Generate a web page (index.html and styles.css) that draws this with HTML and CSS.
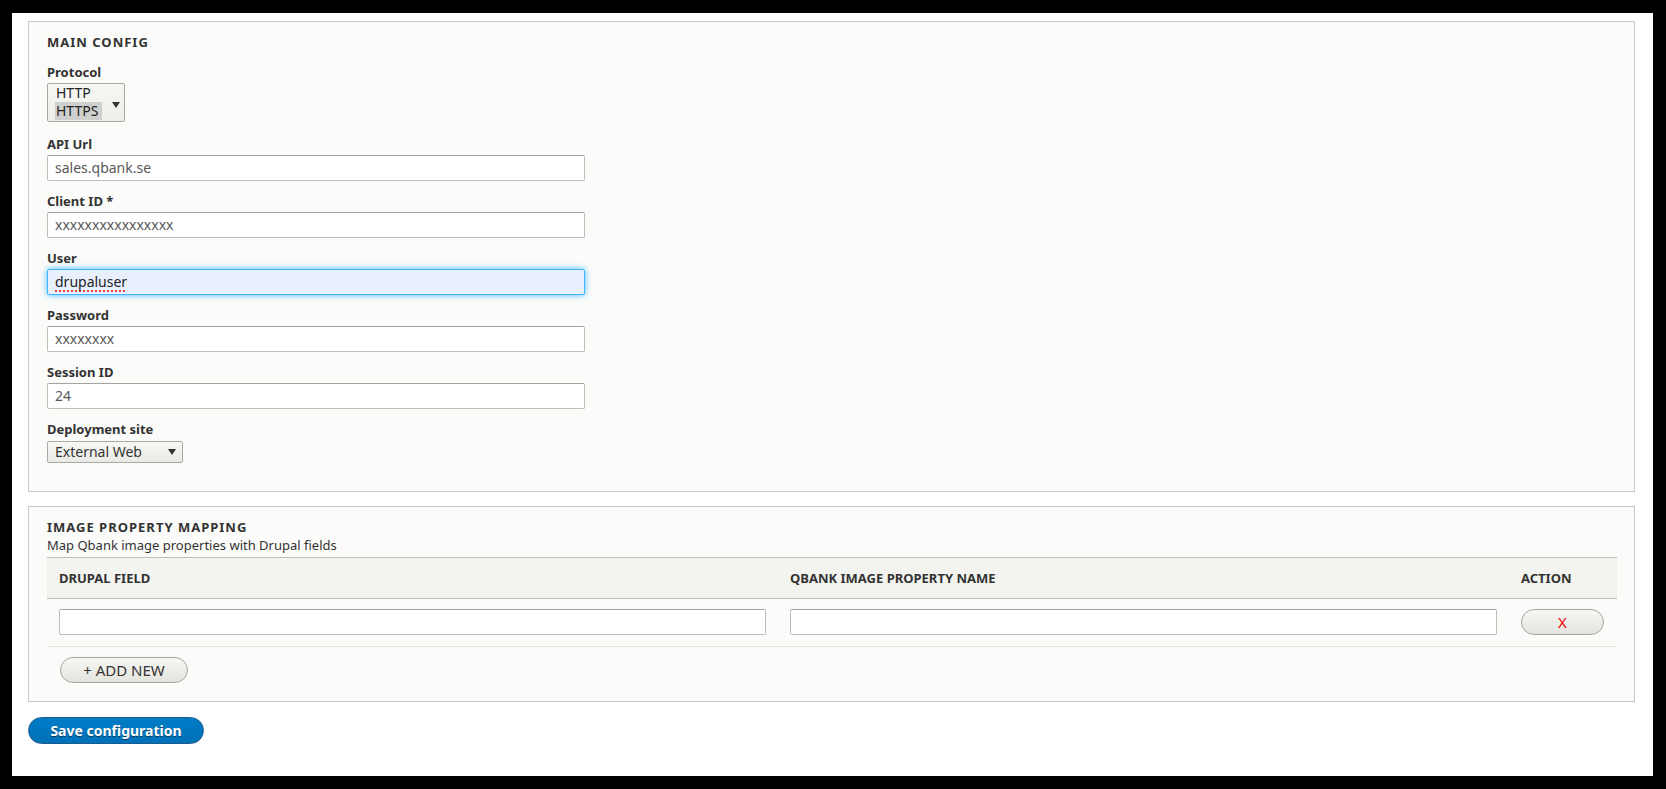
FILE: index.html
```html
<!DOCTYPE html>
<html lang="en">
<head>
<meta charset="utf-8">
<title>Qbank configuration</title>
<link rel="stylesheet" href="styles.css">
</head>
<body>
<div class="page">
  <form class="form">
    <section class="fieldset fieldset-main">
      <h2 class="legend">Main config</h2>

      <div class="form-item form-item-protocol">
        <label class="label">Protocol</label>
        <div class="listbox">
          <div class="listbox-options">
            <span class="option">HTTP</span>
            <span class="option option-selected">HTTPS</span>
          </div>
          <span class="arrow listbox-arrow"></span>
        </div>
      </div>

      <div class="form-item">
        <label class="label">API Url</label>
        <div class="input">sales.qbank.se</div>
      </div>

      <div class="form-item">
        <label class="label">Client ID *</label>
        <div class="input">xxxxxxxxxxxxxxxx</div>
      </div>

      <div class="form-item">
        <label class="label">User</label>
        <div class="input input-focus"><span class="spell">drupaluser</span></div>
      </div>

      <div class="form-item">
        <label class="label">Password</label>
        <div class="input">xxxxxxxx</div>
      </div>

      <div class="form-item">
        <label class="label">Session ID</label>
        <div class="input">24</div>
      </div>

      <div class="form-item form-item-last">
        <label class="label">Deployment site</label>
        <div class="select">
          <span class="select-value">External Web</span>
          <span class="arrow"></span>
        </div>
      </div>
    </section>

    <section class="fieldset fieldset-mapping">
      <h2 class="legend">Image property mapping</h2>
      <p class="description">Map Qbank image properties with Drupal fields</p>
      <table class="mapping">
        <colgroup>
          <col>
          <col>
          <col class="col-action">
        </colgroup>
        <thead>
          <tr>
            <th>Drupal field</th>
            <th>Qbank image property name</th>
            <th>Action</th>
          </tr>
        </thead>
        <tbody>
          <tr>
            <td><div class="input input-cell"></div></td>
            <td><div class="input input-cell"></div></td>
            <td><button type="button" class="button button-remove">X</button></td>
          </tr>
        </tbody>
      </table>
      <button type="button" class="button button-add">+ ADD NEW</button>
    </section>

    <button type="button" class="button button-primary">Save configuration</button>
  </form>
</div>
</body>
</html>
```

FILE: styles.css
```css
* {
  box-sizing: border-box;
}

html,
body {
  margin: 0;
}

body {
  background: #000;
  padding: 13px 13px 13px 12px;
  font-family: "Noto Sans", "DejaVu Sans", sans-serif;
  color: #333;
}

.page {
  background: #fff;
  height: 763px;
  padding: 8px 18px 0 16px;
}

.form {
  display: flex;
  flex-direction: column;
  align-items: flex-start;
}

.fieldset {
  align-self: stretch;
  border: 1px solid #c8c8c4;
  background: #fbfbf9;
  padding: 11px 17px 28px 18px;
}

.fieldset-mapping {
  margin-top: 14px;
  padding-bottom: 18px;
}

.legend {
  margin: 0 0 12px;
  font-size: 13px;
  line-height: 18px;
  font-weight: bold;
  text-transform: uppercase;
  letter-spacing: 1px;
  color: #333;
}

.fieldset-mapping .legend {
  margin-bottom: 0;
}

.description {
  margin: 0 0 3px;
  font-size: 13px;
  line-height: 18px;
  color: #333;
}

.form-item {
  margin-bottom: 11px;
}

.form-item-protocol {
  margin-bottom: 13px;
}

.form-item-last {
  margin-bottom: 0;
}

.label {
  display: block;
  font-size: 13px;
  line-height: 18px;
  font-weight: bold;
  color: #333;
  margin-bottom: 2px;
}

.input {
  width: 538px;
  height: 26px;
  border: 1px solid #bdbdb9;
  border-top-color: #a3a3a0;
  border-radius: 2px;
  background: #fff;
  padding: 0 7px;
  font-size: 14px;
  line-height: 24px;
  color: #595959;
  white-space: nowrap;
  overflow: hidden;
}

.input-focus {
  border-color: #40b6ff;
  background: #e8f0fe;
  box-shadow: 0 0 6px #40b6ff;
  color: #222;
  overflow: visible;
}

.spell {
  text-decoration: underline dotted #e2403a;
  text-decoration-thickness: 2px;
  text-underline-offset: 3px;
}

.listbox {
  display: flex;
  align-items: flex-start;
  width: 78px;
  height: 39px;
  border: 1px solid #a8a8a4;
  border-radius: 2px;
  background: linear-gradient(#f7f7f4, #ececE8);
  padding: 0 4px 0 7px;
}

.listbox-options {
  display: flex;
  flex-direction: column;
  align-items: flex-start;
}

.option {
  font-size: 14px;
  line-height: 18px;
  padding: 0 4px 0 1px;
  color: #222;
}

.option-selected {
  background: #cfcfcd;
}

.arrow {
  width: 0;
  height: 0;
  border-left: 4px solid transparent;
  border-right: 4px solid transparent;
  border-top: 6px solid #333;
}

.listbox-arrow {
  margin-left: auto;
  margin-top: 18px;
}

.select {
  display: flex;
  align-items: center;
  justify-content: space-between;
  width: 136px;
  height: 22px;
  margin-top: 3px;
  border: 1px solid #a8a8a4;
  border-radius: 2px;
  background: linear-gradient(#f7f7f4, #e9e9e5);
  padding: 0 6px 0 7px;
  font-size: 14px;
  color: #333;
}

.select-value {
  line-height: 20px;
}

.mapping {
  width: 100%;
  table-layout: fixed;
  border-collapse: separate;
  border-spacing: 0;
}

.col-action {
  width: 108px;
}

.mapping th {
  text-align: left;
  font-size: 13px;
  line-height: 18px;
  font-weight: bold;
  text-transform: uppercase;
  color: #333;
  background: #f3f3f0;
  border-top: 1px solid #bfbfba;
  border-bottom: 1px solid #bfbfba;
  padding: 11px 12px;
}

.mapping td {
  padding: 10px 12px 11px;
  border-bottom: 1px solid #e3e2dd;
  vertical-align: top;
}

.input-cell {
  width: 100%;
}

.button {
  display: inline-flex;
  align-items: center;
  justify-content: center;
  font-family: "Noto Sans", "DejaVu Sans", sans-serif;
  border: 1px solid #a6a6a6;
  border-radius: 20em;
  background: linear-gradient(#f6f6f3, #e4e4df);
  color: #333;
  padding: 0;
  margin: 0;
  cursor: pointer;
}

.button-remove {
  width: 83px;
  height: 26px;
  font-size: 15px;
  color: #ee0000;
}

.button-add {
  margin: 10px 0 0 13px;
  width: 128px;
  height: 26px;
  font-size: 15px;
  color: #333;
}

.button-primary {
  margin-top: 15px;
  width: 176px;
  height: 27px;
  font-size: 14px;
  font-weight: bold;
  color: #fff;
  background: linear-gradient(#007bc6, #0071b8);
  border-color: #1e5c90;
  text-shadow: 0 1px rgba(0, 0, 0, 0.5);
}
```
